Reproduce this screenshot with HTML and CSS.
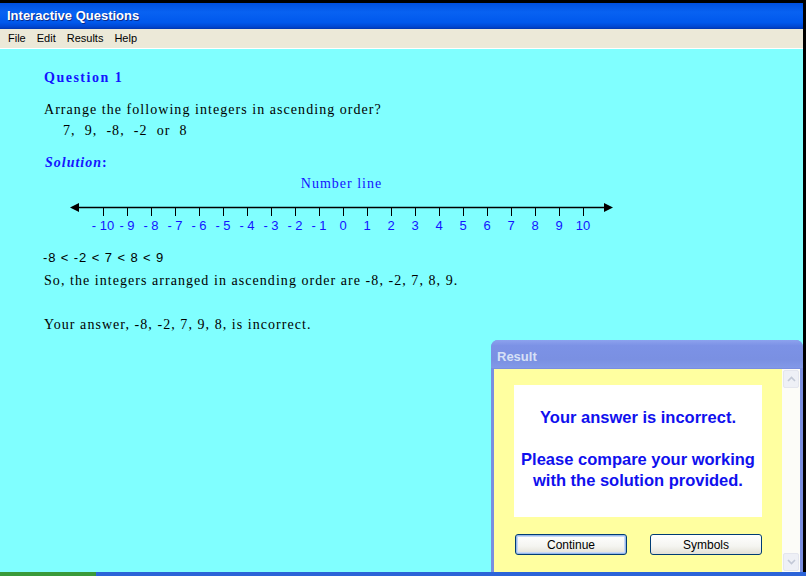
FILE: index.html
```html
<!DOCTYPE html>
<html lang="en">
<head>
    <meta charset="UTF-8">
    <title>Interactive Questions</title>
    <link rel="stylesheet" href="styles.css">
</head>
<body>

<div class="window">
    <div class="titlebar">Interactive Questions</div>
    <div class="menubar">
        <span>File</span>
        <span>Edit</span>
        <span>Results</span>
        <span>Help</span>
    </div>

    <div class="content">
        <h1 class="question-title">Question 1</h1>
        <p class="question-text">Arrange the following integers in ascending order?</p>
        <p class="question-numbers">7,&nbsp; 9,&nbsp; -8,&nbsp; -2&nbsp; or&nbsp; 8</p>

        <h2 class="solution-title">Solution<span>:</span></h2>

        <div class="number-line">
            <div class="number-line-title">Number line</div>
            <svg width="543" height="44" viewBox="0 0 543 44">
                <line x1="4" y1="13.5" x2="539" y2="13.5" stroke="#000" stroke-width="1.6"/>
                <polygon points="0,13.5 9,9 9,18" fill="#000"/>
                <polygon points="543,13.5 534,9 534,18" fill="#000"/>
                <path d="M33.5 14v8M57.5 14v8M81.5 14v8M105.5 14v8M129.5 14v8M153.5 14v8M177.5 14v8M201.5 14v8M225.5 14v8M249.5 14v8M273.5 14v8M297.5 14v8M321.5 14v8M345.5 14v8M369.5 14v8M393.5 14v8M417.5 14v8M441.5 14v8M465.5 14v8M489.5 14v8M513.5 14v8" stroke="#000" stroke-width="1"/>
                <g class="tick-labels" text-anchor="middle">
                    <text x="33" y="35.5">- 10</text>
                    <text x="57" y="35.5">- 9</text>
                    <text x="81" y="35.5">- 8</text>
                    <text x="105" y="35.5">- 7</text>
                    <text x="129" y="35.5">- 6</text>
                    <text x="153" y="35.5">- 5</text>
                    <text x="177" y="35.5">- 4</text>
                    <text x="201" y="35.5">- 3</text>
                    <text x="225" y="35.5">- 2</text>
                    <text x="249" y="35.5">- 1</text>
                    <text x="273" y="35.5">0</text>
                    <text x="297" y="35.5">1</text>
                    <text x="321" y="35.5">2</text>
                    <text x="345" y="35.5">3</text>
                    <text x="369" y="35.5">4</text>
                    <text x="393" y="35.5">5</text>
                    <text x="417" y="35.5">6</text>
                    <text x="441" y="35.5">7</text>
                    <text x="465" y="35.5">8</text>
                    <text x="489" y="35.5">9</text>
                    <text x="513" y="35.5">10</text>
                </g>
            </svg>
        </div>

        <p class="inequality">-8 &lt; -2 &lt; 7 &lt; 8 &lt; 9</p>
        <p class="answer-line">So, the integers arranged in ascending order are -8, -2, 7, 8, 9.</p>
        <p class="your-answer">Your answer, -8, -2, 7, 9, 8, is incorrect.</p>

        <!-- Ergebnis-Fenster liegt über dem Inhalt -->
        <div class="result-dialog">
            <div class="result-titlebar">Result</div>
            <div class="result-body">
                <div class="result-main">
                    <div class="result-message">
                        Your answer is incorrect.<br><br>
                        Please compare your working<br>
                        with the solution provided.
                    </div>
                    <div class="result-buttons">
                        <button class="xp-button focused">Continue</button>
                        <button class="xp-button">Symbols</button>
                    </div>
                </div>
                <div class="scrollbar">
                    <div class="scroll-btn">
                        <svg width="9" height="6" viewBox="0 0 9 6"><path d="M1 5l3.5-3.5L8 5" fill="none" stroke="#c2c8d6" stroke-width="1.6"/></svg>
                    </div>
                    <div class="scroll-track"></div>
                    <div class="scroll-btn">
                        <svg width="9" height="6" viewBox="0 0 9 6"><path d="M1 1l3.5 3.5L8 1" fill="none" stroke="#c2c8d6" stroke-width="1.6"/></svg>
                    </div>
                </div>
            </div>
        </div>
    </div>
</div>

<div class="taskbar">
    <div class="start"></div>
</div>

</body>
</html>
```

FILE: styles.css
```css
html, body {
    height: 100%;
}

body {
    margin: 0;
    padding: 0;
    background-color: #000;
    font-family: 'Liberation Serif', serif;
    display: flex;
    flex-direction: column;
    overflow: hidden;
}

.window {
    flex: 1;
    margin: 3px 3px 0 0;
    display: flex;
    flex-direction: column;
    min-height: 0;
}

.titlebar {
    height: 26px;
    line-height: 25px;
    padding-left: 7px;
    color: #fff;
    font-family: 'Liberation Sans', sans-serif;
    font-weight: bold;
    font-size: 13px;
    text-shadow: 1px 1px 0 #0a2a8a;
    background: linear-gradient(to bottom, #0050e0 0%, #0862f2 35%, #0058ec 75%, #0046d0 92%, #0036b0 100%);
}

.menubar {
    height: 19px;
    line-height: 18px;
    padding-left: 2.5px;
    background-color: #ece9d8;
    border-bottom: 1px solid #fff;
    font-family: 'Liberation Sans', sans-serif;
    font-size: 11px;
    color: #000;
    display: flex;
}

.menubar span {
    padding: 0 5.5px;
}

.content {
    flex: 1;
    position: relative;
    background-color: #80ffff;
    padding: 19px 0 0 44px;
    color: #000;
    font-size: 14px;
    letter-spacing: 1.05px;
}

.content p {
    margin: 0;
    line-height: 20px;
}

.question-title {
    margin: 0;
    font-size: 14px;
    line-height: 20px;
    letter-spacing: 1.5px;
    color: #1414ff;
}

.question-text {
    margin-top: 12px !important;
}

.question-numbers {
    padding-left: 19px;
    line-height: 21px !important;
}

.solution-title {
    margin: 12px 0 0 1px;
    font-size: 14px;
    line-height: 20px;
    font-style: italic;
    letter-spacing: 1px;
    color: #1414ff;
}

.solution-title span {
    font-style: normal;
    color: #1414ff;
}

.number-line {
    width: 543px;
    margin: 1px 0 0 26px;
}

.number-line-title {
    text-align: center;
    line-height: 20px;
    color: #1414ff;
    letter-spacing: 1px;
}

.number-line svg {
    display: block;
}

.tick-labels {
    font-family: 'Liberation Sans', sans-serif;
    font-size: 13px;
    fill: #1414ff;
    letter-spacing: 0;
}

.inequality {
    margin-top: 10px !important;
    margin-left: -1px !important;
    font-family: 'Liberation Sans', sans-serif;
    font-size: 13px;
    letter-spacing: 0.9px;
}

.answer-line {
    margin-top: 3px !important;
}

.your-answer {
    margin-top: 24px !important;
}

/* Result dialog */
.result-dialog {
    position: absolute;
    left: 491px;
    top: 291px;
    right: 0;
    bottom: 0;
    display: flex;
    flex-direction: column;
    background: #7a8ee0;
    border-radius: 7px 7px 0 0;
    font-family: 'Liberation Sans', sans-serif;
    letter-spacing: 0;
}

.result-titlebar {
    height: 28px;
    line-height: 33px;
    padding-left: 6px;
    color: #d6e0f6;
    font-weight: bold;
    font-size: 13px;
    border-radius: 7px 7px 0 0;
    background: linear-gradient(to bottom, #8da2ee 0%, #7c92e6 20%, #7a90e2 70%, #8299e8 100%);
}

.result-body {
    flex: 1;
    display: flex;
    margin: 1px 3px 0 3px;
    background-color: #ffffa0;
}

.result-main {
    flex: 1;
    padding: 16px 20px 0 20px;
}

.result-message {
    background: #fff;
    height: 110px;
    padding-top: 22px;
    text-align: center;
    color: #1010ee;
    font-weight: bold;
    font-size: 16.5px;
    line-height: 21px;
}

.result-buttons {
    display: flex;
    justify-content: space-between;
    margin-top: 17px;
    padding: 0 0 0 1px;
}

.xp-button {
    width: 112px;
    height: 21px;
    padding: 0;
    font-family: 'Liberation Sans', sans-serif;
    font-size: 12px;
    color: #000;
    border: 1px solid #003c74;
    border-radius: 3px;
    background: linear-gradient(to bottom, #ffffff 0%, #f4f4f0 60%, #e2e0d6 100%);
}

.xp-button.focused {
    box-shadow: inset 0 0 0 1px #98b8ea, inset 0 0 0 2px #c6d8f6;
}

.scrollbar {
    width: 18px;
    display: flex;
    flex-direction: column;
    background: #fcfcf8;
}

.scroll-btn {
    height: 16px;
    margin: 1px 1px;
    border: 1px solid #e4e6ee;
    border-radius: 2px;
    background: #eef0f6;
    display: flex;
    align-items: center;
    justify-content: center;
}

.scroll-track {
    flex: 1;
}

.taskbar {
    height: 4px;
    background: #2c64d8;
    display: flex;
}

.start {
    width: 96px;
    background: #3a9a3a;
}
```
